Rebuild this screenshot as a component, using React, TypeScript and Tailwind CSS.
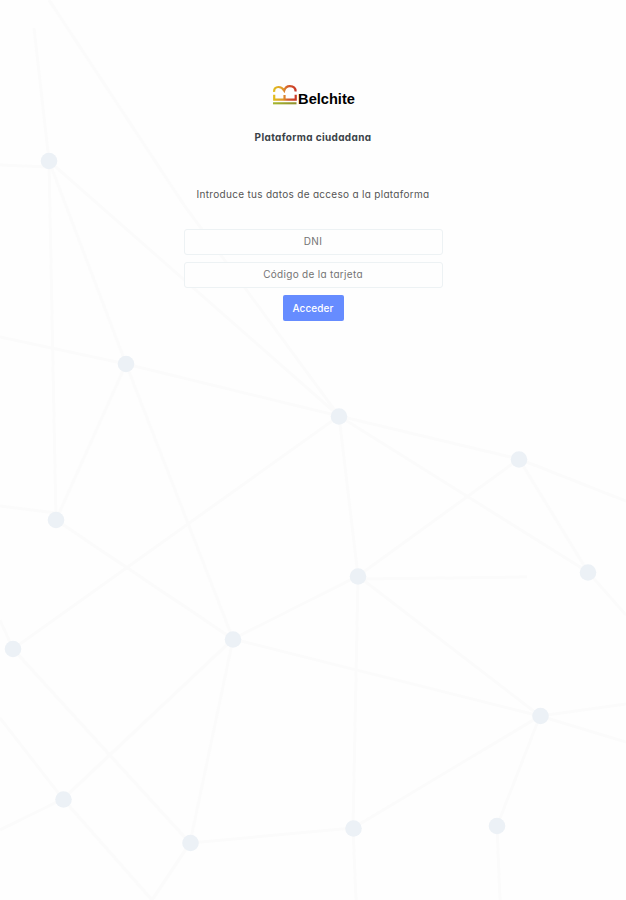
const nodes: [number, number][] = [
  [49, 161], [126, 364], [339, 416.5], [519, 459.5], [56, 520], [358, 576.5], [588, 572.5],
  [13, 649], [233, 639.5], [540.5, 716], [63.5, 799.5], [190.5, 843], [353.5, 828.5], [497, 826],
];

const edges: [number, number, number, number][] = [
  [34, 28, 49, 161], [0, 165, 49, 167], [49, 0, 184, 205], [184, 205, 339, 416],
  [49, 161, 339, 416], [49, 161, 126, 364], [49, 161, 56, 520], [0, 337, 126, 364],
  [126, 364, 339, 416], [126, 364, 56, 520], [126, 364, 233, 639], [339, 416, 13, 649],
  [339, 416, 519, 459], [339, 416, 588, 572], [339, 416, 358, 576], [519, 459, 626, 501],
  [519, 459, 588, 572], [519, 459, 358, 576], [0, 506, 56, 513], [56, 520, 233, 639],
  [358, 579, 527, 577], [358, 576, 233, 639], [358, 576, 540, 716], [358, 576, 353, 828],
  [588, 572, 626, 615], [0, 620, 13, 649], [13, 649, 190, 843], [233, 639, 63, 799],
  [233, 639, 190, 843], [233, 639, 540, 716], [540, 716, 626, 704], [540, 716, 626, 742],
  [540, 716, 353, 828], [540, 716, 497, 826], [0, 718, 63, 799], [0, 830, 63, 799],
  [63, 799, 152, 900], [190, 843, 152, 900], [190, 843, 353, 828], [353, 828, 356, 900],
  [497, 826, 500, 900],
];

function Network() {
  return (
    <svg className="pointer-events-none absolute inset-0" width="626" height="900" viewBox="0 0 626 900" aria-hidden="true">
      <g stroke="#fbfbfb" strokeWidth="3">
        {edges.map(([x1, y1, x2, y2], i) => (
          <line key={i} x1={x1} y1={y1} x2={x2} y2={y2} />
        ))}
      </g>
      <g fill="#ecf1f6">
        {nodes.map(([x, y], i) => (
          <circle key={i} cx={x} cy={y} r="8.3" />
        ))}
      </g>
    </svg>
  );
}

function Logo() {
  return (
    <div className="ml-[2px] flex h-[20px] items-start">
      <svg width="24" height="20" viewBox="0 0 24 20" fill="none" className="shrink-0">
        <defs>
          <linearGradient id="crown" x1="0" y1="0" x2="24" y2="0" gradientUnits="userSpaceOnUse">
            <stop offset="0" stopColor="#e0bf1c" />
            <stop offset=".4" stopColor="#e09a2c" />
            <stop offset=".6" stopColor="#d4602c" />
            <stop offset="1" stopColor="#c93226" />
          </linearGradient>
          <linearGradient id="base" x1="0" y1="0" x2="24" y2="0" gradientUnits="userSpaceOnUse">
            <stop offset="0" stopColor="#a5b72d" />
            <stop offset="1" stopColor="#8e8c2c" />
          </linearGradient>
        </defs>
        <g stroke="url(#crown)" strokeWidth="2.2">
          <path d="M1.2 6.8C.8 3.8 2.6 2 5.4 2C8 2 9.8 3.3 11.2 5.6C12.2 2.4 14 1.2 16.8 1.2C20.3 1.2 22.6 3.3 22.6 6.6" />
          <path d="M1.2 9.8V14.6H22.7V9.8M11.5 14V10" />
        </g>
        <path d="M0 18.3H23.5" stroke="url(#base)" strokeWidth="2.1" />
      </svg>
      <span className="ml-[1px] mt-[5px] font-['Liberation_Sans',sans-serif] text-[14.6px] leading-[18px] font-bold text-black">
        Belchite
      </span>
    </div>
  );
}

const inputClass =
  "h-[26px] w-[259px] rounded-[3px] border border-[#edf2f4] bg-[#fefefe] pb-[2px] text-center text-[10px] tracking-[0.3px] text-[#555] placeholder:text-[#747474] placeholder:opacity-100 outline-none";

export default function App() {
  return (
    <div className="relative h-[900px] w-[626px] overflow-hidden bg-[#fefefe] font-['Inter',sans-serif] [font-feature-settings:'cv11']">
      <Network />
      <main className="relative flex flex-col items-center pt-[85px]">
        <Logo />
        <h1 className="mt-[24px] text-[10px] leading-[16px] font-bold tracking-[0.35px] text-[#3b4248]">Plataforma ciudadana</h1>
        <p className="mt-[41px] text-[10px] leading-[16px] tracking-[0.3px] text-[#555]">
          Introduce tus datos de acceso a la plataforma
        </p>
        <form className="mt-[27px] flex flex-col items-center" onSubmit={(e) => e.preventDefault()}>
          <input className={inputClass} placeholder="DNI" />
          <input className={inputClass + " mt-[7px]"} placeholder="Código de la tarjeta" />
          <button className="mt-[7px] h-[26px] w-[61px] rounded-[2px] bg-[#668cff] text-[10px] font-medium tracking-[0.1px] text-white">Acceder</button>
        </form>
      </main>
    </div>
  );
}
